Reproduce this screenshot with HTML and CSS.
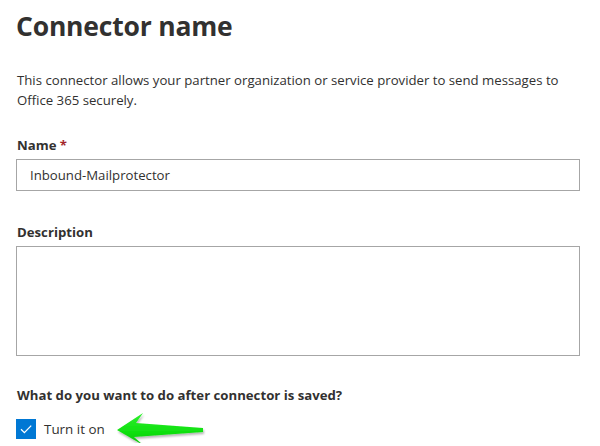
FILE: index.html
```html
<!DOCTYPE html>
<html>
<head>
<meta charset="utf-8">
<link rel="stylesheet" href="styles.css">
</head>
<body>
<main class="panel">
  <h1 class="title">Connector name</h1>
  <p class="intro">This connector allows your partner organization or service provider to send messages to Office 365 securely.</p>
  <div class="field field-name">
    <label class="label">Name <span class="req">*</span></label>
    <div class="input">Inbound-Mailprotector</div>
  </div>
  <div class="field field-desc">
    <label class="label">Description</label>
    <div class="textarea"></div>
  </div>
  <div class="field field-after">
    <div class="label">What do you want to do after connector is saved?</div>
    <div class="check-row">
      <span class="checkbox">
        <svg width="20" height="20" viewBox="0 0 20 20"><path d="M5 10.3 L8.4 13.6 L15.2 6.6" fill="none" stroke="#fff" stroke-width="1.3"/></svg>
      </span>
      <span class="check-text">Turn it on</span>
      <svg class="arrow" width="92" height="38" viewBox="0 0 92 38">
        <defs>
          <linearGradient id="g" x1="0" y1="0" x2="0" y2="1">
            <stop offset="0" stop-color="#2ef02e"/>
            <stop offset="0.6" stop-color="#10e010"/>
            <stop offset="1" stop-color="#08c208"/>
          </linearGradient>
          <filter id="s" x="-10%" y="-20%" width="130%" height="160%">
            <feGaussianBlur in="SourceAlpha" stdDeviation="1.2"/>
            <feOffset dx="1" dy="2"/>
            <feComponentTransfer><feFuncA type="linear" slope="0.3"/></feComponentTransfer>
            <feMerge><feMergeNode/><feMergeNode in="SourceGraphic"/></feMerge>
          </filter>
        </defs>
        <path filter="url(#s)" fill="url(#g)" d="M2 19 L28 2 L21 12 L88 17 L88 21 L19 26 L28 34 Z"/>
      </svg>
    </div>
  </div>
</main>
</body>
</html>
```
FILE: styles.css
```css
html, body {
  margin: 0;
  padding: 0;
  background: #ffffff;
}
body {
  font-family: "Segoe UI", "Open Sans", "Noto Sans", sans-serif;
  color: #323130;
}
.panel {
  padding: 4px 20px 0 16px;
  width: 564px;
}
.title {
  margin: 0;
  font-size: 26.5px;
  font-weight: 700;
  line-height: 44px;
  color: #323130;
  letter-spacing: -0.2px;
}
.intro {
  margin: 22px 0 0 0;
  font-size: 13.2px;
  line-height: 20px;
  color: #323130;
  padding-left: 1px;
  letter-spacing: 0;
}
.field {
  display: flex;
  flex-direction: column;
}
.label {
  display: block;
  font-size: 13.2px;
  font-weight: 700;
  line-height: 20px;
  padding-left: 1px;
  margin-bottom: 4px;
  letter-spacing: 0;
}
.field-name { margin-top: 25px; }
.req { color: #a4262c; }
.input {
  box-sizing: border-box;
  height: 32px;
  border: 1px solid #a6a6a6;
  padding: 0 13px;
  font-size: 13.2px;
  line-height: 30px;
  color: #323130;
}
.field-desc { margin-top: 31px; }
.textarea {
  box-sizing: border-box;
  height: 110px;
  border: 1px solid #a6a6a6;
}
.field-after { margin-top: 29px; }
.field-after .label { margin-bottom: 10px; }
.check-row {
  display: flex;
  align-items: center;
  height: 28px;
}
.checkbox {
  width: 20px;
  height: 20px;
  background: #0078d4;
  display: inline-flex;
}
.check-text {
  margin-left: 8px;
  font-size: 13.4px;
  color: #323130;
}
.arrow {
  margin-left: 10px;
  margin-top: 2px;
}
```
